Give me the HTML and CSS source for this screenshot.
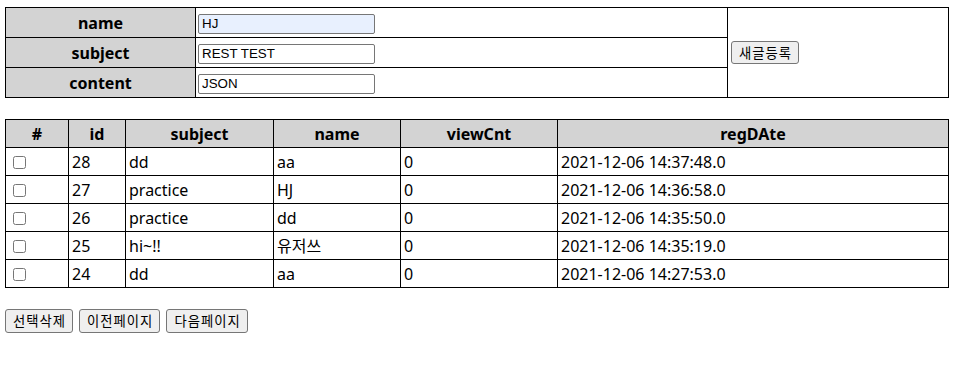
FILE: index.html
```html
<!DOCTYPE html>
<html lang="ko">
  <head>
    <meta charset="UTF-8" />
    <meta name="viewport" content="width=device-width, initial-scale=1.0" />
    <title>REST 게시판</title>
    <link rel="stylesheet" href="styles.css">
  </head>
  <body>
    <form id="write-form">
      <table class="write-table">
        <tr>
          <th class="label-cell">name</th>
          <td class="field-cell"><input type="text" class="autofill" name="name" value="HJ" /></td>
          <td class="submit-cell" rowspan="3"><button type="button" class="btn">새글등록</button></td>
        </tr>
        <tr>
          <th class="label-cell">subject</th>
          <td class="field-cell"><input type="text" name="subject" value="REST TEST" /></td>
        </tr>
        <tr>
          <th class="label-cell">content</th>
          <td class="field-cell"><input type="text" name="content" value="JSON" /></td>
        </tr>
      </table>
    </form>

    <table class="list-table">
      <thead>
        <tr>
          <th class="col-check">#</th>
          <th class="col-id">id</th>
          <th class="col-subject">subject</th>
          <th class="col-name">name</th>
          <th class="col-view">viewCnt</th>
          <th class="col-date">regDAte</th>
        </tr>
      </thead>
      <tbody id="list">
        <tr>
          <td><input type="checkbox" /></td>
          <td>28</td>
          <td>dd</td>
          <td>aa</td>
          <td>0</td>
          <td>2021-12-06 14:37:48.0</td>
        </tr>
        <tr>
          <td><input type="checkbox" /></td>
          <td>27</td>
          <td>practice</td>
          <td>HJ</td>
          <td>0</td>
          <td>2021-12-06 14:36:58.0</td>
        </tr>
        <tr>
          <td><input type="checkbox" /></td>
          <td>26</td>
          <td>practice</td>
          <td>dd</td>
          <td>0</td>
          <td>2021-12-06 14:35:50.0</td>
        </tr>
        <tr>
          <td><input type="checkbox" /></td>
          <td>25</td>
          <td>hi~!!</td>
          <td>유저쓰</td>
          <td>0</td>
          <td>2021-12-06 14:35:19.0</td>
        </tr>
        <tr>
          <td><input type="checkbox" /></td>
          <td>24</td>
          <td>dd</td>
          <td>aa</td>
          <td>0</td>
          <td>2021-12-06 14:27:53.0</td>
        </tr>
      </tbody>
    </table>

    <div class="paging">
      <button type="button" class="btn">선택삭제</button>
      <button type="button" class="btn">이전페이지</button>
      <button type="button" class="btn">다음페이지</button>
    </div>
  </body>
</html>
```

FILE: styles.css
```css
body {
  margin: 7px 5px;
  font-family: "Noto Sans", "Noto Sans CJK KR", sans-serif;
  font-size: 16px;
  color: #000000;
  background-color: #ffffff;
}

form {
  margin: 0;
}

table {
  width: 100%;
  border-collapse: collapse;
  border: 1px solid #000000;
}

th,
td {
  border: 1px solid #000000;
  padding: 0 3px;
}

th {
  background-color: #d3d3d3;
  font-weight: bold;
  text-align: center;
}

.write-table tr {
  height: 30px;
}

.write-table .label-cell {
  width: 183px;
}

.write-table .field-cell {
  width: 527px;
  padding: 0 2px;
}

.write-table .submit-cell {
  padding: 0 3px;
}

input[type="text"] {
  box-sizing: border-box;
  width: 177px;
  height: 20px;
  margin: 0;
  padding: 1px 3px;
  border: 1px solid #767676;
  border-radius: 2px;
  font-family: "Liberation Sans", Arial, sans-serif;
  font-size: 13.33px;
  color: #000000;
  background-color: #ffffff;
  vertical-align: middle;
}

input.autofill {
  background-color: #e8f0fe;
}

.btn {
  box-sizing: border-box;
  height: 23px;
  padding: 0 6px 0 7px;
  border: 1px solid #767676;
  border-radius: 3px;
  background-color: #efefef;
  font-family: "Noto Sans CJK KR", sans-serif;
  font-size: 13.33px;
  letter-spacing: 1px;
  line-height: 20px;
  color: #000000;
  cursor: pointer;
}

.list-table {
  margin-top: 21px;
}

.list-table tr {
  height: 28px;
}

.list-table td {
  padding: 0 3px;
  line-height: 20px;
}

.list-table .col-check {
  width: 56px;
}

.list-table .col-id {
  width: 50px;
}

.list-table .col-subject {
  width: 141px;
}

.list-table .col-name {
  width: 120px;
}

.list-table .col-view {
  width: 150px;
}

input[type="checkbox"] {
  width: 13px;
  height: 13px;
  margin: 3px 3px 3px 4px;
  vertical-align: middle;
}

.paging {
  margin-top: 21px;
  display: flex;
  gap: 6px;
}

.paging .btn {
  height: 24px;
}
```
